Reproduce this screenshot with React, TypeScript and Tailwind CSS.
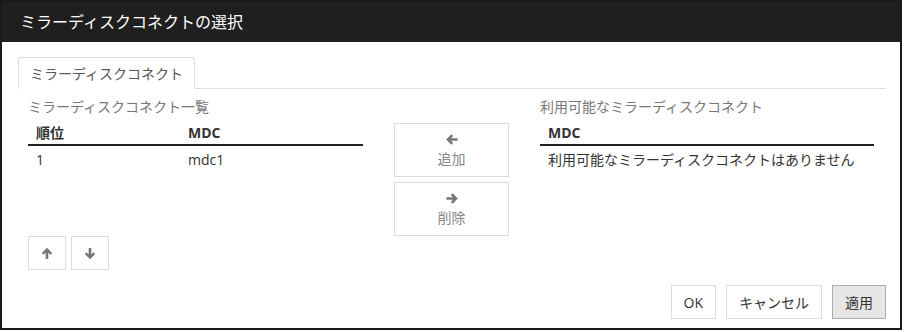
const FONT = "font-['Open_Sans','Noto_Sans_CJK_JP',sans-serif]";

type Dir = "left" | "right" | "up" | "down";

function Arrow({ dir, className }: { dir: Dir; className?: string }) {
  const rot = { left: 0, right: 180, up: 90, down: 270 }[dir];
  return (
    <svg
      width="12"
      height="11"
      viewBox="0 0 12 11"
      className={className}
      style={{ transform: `rotate(${rot}deg)` }}
    >
      <path
        d="M11.6 5.5H2.2M6.3 1.2L2 5.5L6.3 9.8"
        fill="none"
        stroke="currentColor"
        strokeWidth="2.6"
        strokeLinejoin="miter"
      />
    </svg>
  );
}

function MoveButton({ dir, label }: { dir: Dir; label: string }) {
  return (
    <button className="flex h-[54px] w-[115px] flex-col items-center border border-[#dcdcdc] bg-white pt-[10px] text-[#888]">
      <Arrow dir={dir} className="text-[#777]" />
      <span className="mt-[4px] text-[14px] leading-5">{label}</span>
    </button>
  );
}

function SortButton({ dir }: { dir: Dir }) {
  return (
    <button className="flex h-[34px] w-[38px] items-center justify-center border border-[#dcdcdc] bg-white text-[#777]">
      <Arrow dir={dir} />
    </button>
  );
}

function TableHead({ cols }: { cols: { label: string; w?: string }[] }) {
  return (
    <div className="flex border-b-2 border-[#222] pt-[6px] pb-px text-[14px] leading-5 font-bold text-[#333]">
      {cols.map((c) => (
        <div key={c.label} className={`px-2 ${c.w ?? "flex-1"}`}>
          {c.label}
        </div>
      ))}
    </div>
  );
}

export default function App() {
  return (
    <div className={`${FONT} h-[330px] w-[902px] border-2 border-[#1a1a1a] bg-white`}>
      <div className="flex h-[40px] items-center bg-[#1f1f1f] pl-[18px] text-[16px] text-white">
        ミラーディスクコネクトの選択
      </div>

      <div className="pl-4 pr-[14px] pt-[15px]">
        <div className="flex border-b border-[#dddddd]">
          <div className="-mb-px flex h-[32px] items-center rounded-t-[3px] border border-b-white border-[#dddddd] bg-white px-[11px] text-[14px] text-[#555]">
            ミラーディスクコネクト
          </div>
        </div>

        <div className="flex gap-[31px] pl-[10px] pr-[12px] pt-[8px]">
          <div className="w-[335px]">
            <div className="text-[14px] leading-5 text-[#777]">ミラーディスクコネクト一覧</div>
            <div className="h-[109px]">
              <TableHead cols={[{ label: "順位", w: "w-[152px]" }, { label: "MDC" }]} />
              <div className="flex pt-[4px] text-[14px] leading-5 text-[#333]">
                <div className="w-[152px] px-2">1</div>
                <div className="flex-1 px-2">mdc1</div>
              </div>
            </div>
            <div className="mt-[10px] flex gap-[5px]">
              <SortButton dir="up" />
              <SortButton dir="down" />
            </div>
          </div>

          <div className="mt-[26px] flex flex-col gap-[5px]">
            <MoveButton dir="left" label="追加" />
            <MoveButton dir="right" label="削除" />
          </div>

          <div className="flex-1">
            <div className="text-[14px] leading-5 text-[#777]">利用可能なミラーディスクコネクト</div>
            <TableHead cols={[{ label: "MDC" }]} />
            <div className="px-2 pt-[4px] text-[14px] leading-5 text-[#333]">
              利用可能なミラーディスクコネクトはありません
            </div>
          </div>
        </div>

        <div className="mt-[15px] flex justify-end gap-[10px]">
          <button className="h-[34px] border border-[#dcdcdc] bg-white px-[12px] text-[14px] text-[#333]">OK</button>
          <button className="h-[34px] border border-[#dcdcdc] bg-white px-[12px] text-[14px] text-[#333]">キャンセル</button>
          <button className="h-[34px] border border-[#adadad] bg-[#e6e6e6] px-[12px] text-[14px] text-[#333]">適用</button>
        </div>
      </div>
    </div>
  );
}
